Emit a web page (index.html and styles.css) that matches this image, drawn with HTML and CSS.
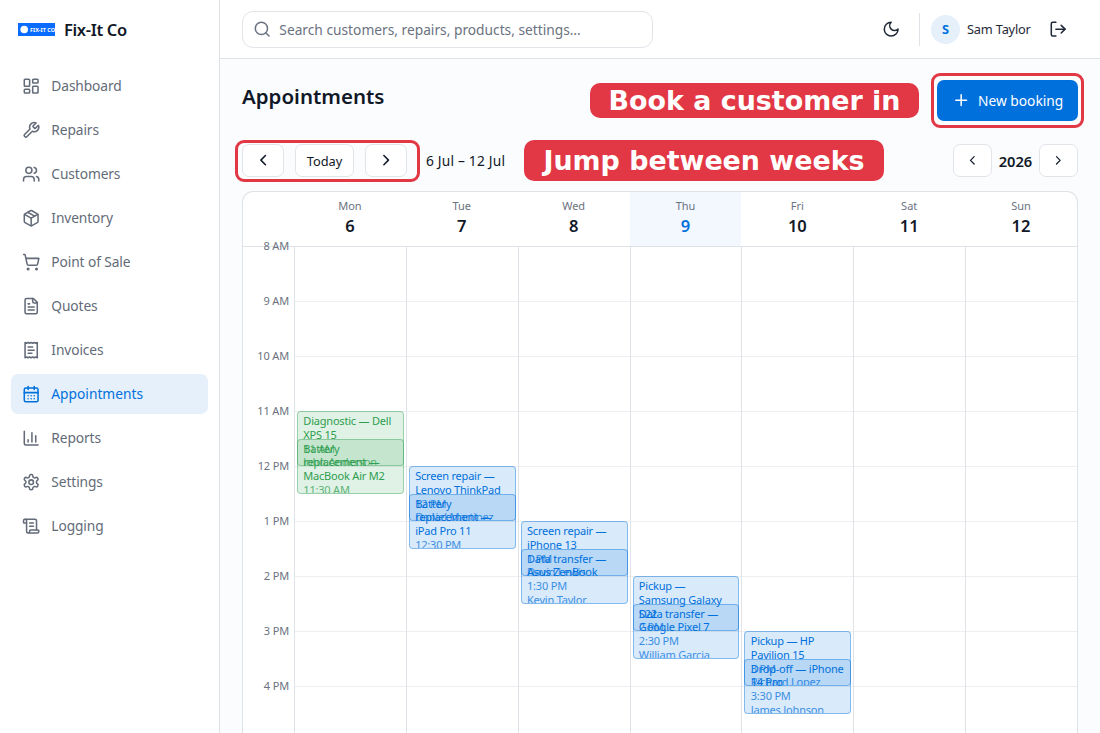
FILE: index.html
```html
<!DOCTYPE html>
<html lang="en">
<head>
  <meta charset="UTF-8" />
  <meta name="viewport" content="width=device-width, initial-scale=1.0"/>
  <title>Appointments - Fix-It Co</title>
  <link rel="stylesheet" href="styles.css">
</head>
<body>
  <aside class="sidebar">
    <div class="brand">
      <svg class="brand-logo" viewBox="0 0 37 13">
        <rect width="37" height="13" fill="#0a6cff"/>
        <circle cx="6.2" cy="6.5" r="3.8" fill="#fff"/>
        <text x="12" y="8.5" class="brand-logo-text" textLength="25" lengthAdjust="spacingAndGlyphs">FIX-IT CO</text>
      </svg>
      <span class="brand-name">Fix-It Co</span>
    </div>
    <nav class="nav">
      <a class="nav-item"><svg class="icon" viewBox="0 0 24 24"><rect width="7" height="9" x="3" y="3" rx="1"/><rect width="7" height="5" x="14" y="3" rx="1"/><rect width="7" height="9" x="14" y="12" rx="1"/><rect width="7" height="5" x="3" y="16" rx="1"/></svg><span>Dashboard</span></a>
      <a class="nav-item"><svg class="icon" viewBox="0 0 24 24"><path d="M14.7 6.3a1 1 0 0 0 0 1.4l1.6 1.6a1 1 0 0 0 1.4 0l3.77-3.77a6 6 0 0 1-7.94 7.94l-6.91 6.91a2.12 2.12 0 0 1-3-3l6.91-6.91a6 6 0 0 1 7.94-7.94l-3.76 3.76z"/></svg><span>Repairs</span></a>
      <a class="nav-item"><svg class="icon" viewBox="0 0 24 24"><path d="M16 21v-2a4 4 0 0 0-4-4H6a4 4 0 0 0-4 4v2"/><circle cx="9" cy="7" r="4"/><path d="M22 21v-2a4 4 0 0 0-3-3.87"/><path d="M16 3.13a4 4 0 0 1 0 7.75"/></svg><span>Customers</span></a>
      <a class="nav-item"><svg class="icon" viewBox="0 0 24 24"><path d="M11 21.73a2 2 0 0 0 2 0l7-4A2 2 0 0 0 21 16V8a2 2 0 0 0-1-1.73l-7-4a2 2 0 0 0-2 0l-7 4A2 2 0 0 0 3 8v8a2 2 0 0 0 1 1.73z"/><path d="M12 22V12"/><path d="m3.3 7 8.7 5 8.7-5"/><path d="m7.5 4.27 9 5.15"/></svg><span>Inventory</span></a>
      <a class="nav-item"><svg class="icon" viewBox="0 0 24 24"><circle cx="8" cy="21" r="1"/><circle cx="19" cy="21" r="1"/><path d="M2.05 2.05h2l2.66 12.42a2 2 0 0 0 2 1.58h9.78a2 2 0 0 0 1.95-1.57l1.65-7.43H5.12"/></svg><span>Point of Sale</span></a>
      <a class="nav-item"><svg class="icon" viewBox="0 0 24 24"><path d="M15 2H6a2 2 0 0 0-2 2v16a2 2 0 0 0 2 2h12a2 2 0 0 0 2-2V7Z"/><path d="M14 2v4a2 2 0 0 0 2 2h4"/><path d="M10 9H8"/><path d="M16 13H8"/><path d="M16 17H8"/></svg><span>Quotes</span></a>
      <a class="nav-item"><svg class="icon" viewBox="0 0 24 24"><path d="M4 2v20l2-1 2 1 2-1 2 1 2-1 2 1 2-1 2 1V2l-2 1-2-1-2 1-2-1-2 1-2-1-2 1Z"/><path d="M14 8H8"/><path d="M16 12H8"/><path d="M13 16H8"/></svg><span>Invoices</span></a>
      <a class="nav-item active"><svg class="icon" viewBox="0 0 24 24"><path d="M8 2v4"/><path d="M16 2v4"/><rect width="18" height="18" x="3" y="4" rx="2"/><path d="M3 10h18"/><path d="M8 14h.01"/><path d="M12 14h.01"/><path d="M16 14h.01"/><path d="M8 18h.01"/><path d="M12 18h.01"/><path d="M16 18h.01"/></svg><span>Appointments</span></a>
      <a class="nav-item"><svg class="icon" viewBox="0 0 24 24"><path d="M3 3v16a2 2 0 0 0 2 2h16"/><path d="M18 17V9"/><path d="M13 17V5"/><path d="M8 17v-3"/></svg><span>Reports</span></a>
      <a class="nav-item"><svg class="icon" viewBox="0 0 24 24"><path d="M12.22 2h-.44a2 2 0 0 0-2 2v.18a2 2 0 0 1-1 1.73l-.43.25a2 2 0 0 1-2 0l-.15-.08a2 2 0 0 0-2.73.73l-.22.38a2 2 0 0 0 .73 2.73l.15.1a2 2 0 0 1 1 1.72v.51a2 2 0 0 1-1 1.74l-.15.09a2 2 0 0 0-.73 2.73l.22.38a2 2 0 0 0 2.73.73l.15-.08a2 2 0 0 1 2 0l.43.25a2 2 0 0 1 1 1.73V20a2 2 0 0 0 2 2h.44a2 2 0 0 0 2-2v-.18a2 2 0 0 1 1-1.73l.43-.25a2 2 0 0 1 2 0l.15.08a2 2 0 0 0 2.73-.73l.22-.39a2 2 0 0 0-.73-2.73l-.15-.08a2 2 0 0 1-1-1.74v-.5a2 2 0 0 1 1-1.74l.15-.09a2 2 0 0 0 .73-2.73l-.22-.38a2 2 0 0 0-2.73-.73l-.15.08a2 2 0 0 1-2 0l-.43-.25a2 2 0 0 1-1-1.73V4a2 2 0 0 0-2-2z"/><circle cx="12" cy="12" r="3"/></svg><span>Settings</span></a>
      <a class="nav-item"><svg class="icon" viewBox="0 0 24 24"><path d="M15 12h-5"/><path d="M15 8h-5"/><path d="M19 17V5a2 2 0 0 0-2-2H4"/><path d="M8 21h12a2 2 0 0 0 2-2v-1a1 1 0 0 0-1-1H11a1 1 0 0 0-1 1v1a2 2 0 1 1-4 0V5a2 2 0 1 0-4 0v2a1 1 0 0 0 1 1h3"/></svg><span>Logging</span></a>
    </nav>
  </aside>

  <div class="page">
    <header class="topbar">
      <div class="search">
        <svg class="icon" viewBox="0 0 24 24"><circle cx="11" cy="11" r="8"/><path d="m21 21-4.3-4.3"/></svg>
        <span>Search customers, repairs, products, settings…</span>
      </div>
      <div class="user-area">
        <svg class="icon" viewBox="0 0 24 24"><path d="M12 3a6 6 0 0 0 9 9 9 9 0 1 1-9-9Z"/></svg>
        <div class="divider"></div>
        <div class="avatar">S</div>
        <span class="user-name">Sam Taylor</span>
        <svg class="icon" viewBox="0 0 24 24"><path d="m16 17 5-5-5-5"/><path d="M21 12H9"/><path d="M9 21H5a2 2 0 0 1-2-2V5a2 2 0 0 1 2-2h4"/></svg>
      </div>
    </header>

    <main class="content">
      <div class="title-row">
        <h1>Appointments</h1>
        <div class="callout callout-book">Book a customer in</div>
        <div class="highlighted">
          <button class="btn-primary">
            <svg class="icon" viewBox="0 0 24 24"><path d="M5 12h14"/><path d="M12 5v14"/></svg>
            <span>New booking</span>
          </button>
        </div>
      </div>

      <div class="toolbar">
        <div class="highlighted week-nav">
          <button class="btn"><svg class="icon" viewBox="0 0 24 24"><path d="m15 18-6-6 6-6"/></svg></button>
          <button class="btn btn-today">Today</button>
          <button class="btn"><svg class="icon" viewBox="0 0 24 24"><path d="m9 18 6-6-6-6"/></svg></button>
        </div>
        <span class="range">6 Jul – 12 Jul</span>
        <div class="callout callout-weeks">Jump between weeks</div>
        <div class="year-nav">
          <button class="btn"><svg class="icon" viewBox="0 0 24 24"><path d="m15 18-6-6 6-6"/></svg></button>
          <span class="year">2026</span>
          <button class="btn"><svg class="icon" viewBox="0 0 24 24"><path d="m9 18 6-6-6-6"/></svg></button>
        </div>
      </div>

      <div class="calendar">
        <div class="cal-head">
          <div></div>
          <div class="day"><span>Mon</span><b>6</b></div>
          <div class="day"><span>Tue</span><b>7</b></div>
          <div class="day"><span>Wed</span><b>8</b></div>
          <div class="day today"><span>Thu</span><b>9</b></div>
          <div class="day"><span>Fri</span><b>10</b></div>
          <div class="day"><span>Sat</span><b>11</b></div>
          <div class="day"><span>Sun</span><b>12</b></div>
        </div>
        <div class="cal-body">
          <div class="hours">
            <div><span>8 AM</span></div>
            <div><span>9 AM</span></div>
            <div><span>10 AM</span></div>
            <div><span>11 AM</span></div>
            <div><span>12 PM</span></div>
            <div><span>1 PM</span></div>
            <div><span>2 PM</span></div>
            <div><span>3 PM</span></div>
            <div><span>4 PM</span></div>
          </div>
          <div class="col">
            <div class="event green" style="top: 164px"><p>Diagnostic — Dell<br>XPS 15</p><small>11 AM</small><small>John Anderson</small></div>
            <div class="event green" style="top: 191.5px"><p>Battery<br>replacement —<br>MacBook Air M2</p><small>11:30 AM</small></div>
          </div>
          <div class="col">
            <div class="event" style="top: 219px"><p>Screen repair —<br>Lenovo ThinkPad</p><small>12 PM</small><small>Daniel Martinez</small></div>
            <div class="event" style="top: 246.5px"><p>Battery<br>replacement —<br>iPad Pro 11</p><small>12:30 PM</small></div>
          </div>
          <div class="col">
            <div class="event" style="top: 274px"><p>Screen repair —<br>iPhone 13</p><small>1 PM</small><small>David Lewis</small></div>
            <div class="event" style="top: 301.5px"><p>Data transfer —<br>Asus ZenBook</p><small>1:30 PM</small><small>Kevin Taylor</small></div>
          </div>
          <div class="col">
            <div class="event" style="top: 329px"><p>Pickup —<br>Samsung Galaxy<br>S22</p><small>2 PM</small></div>
            <div class="event" style="top: 356.5px"><p>Data transfer —<br>Google Pixel 7</p><small>2:30 PM</small><small>William Garcia</small></div>
          </div>
          <div class="col">
            <div class="event" style="top: 384px"><p>Pickup — HP<br>Pavilion 15</p><small>3 PM</small><small>Richard Lopez</small></div>
            <div class="event" style="top: 411.5px"><p>Drop-off — iPhone<br>14 Pro</p><small>3:30 PM</small><small>James Johnson</small></div>
          </div>
          <div class="col"></div>
          <div class="col"></div>
        </div>
      </div>
    </main>
  </div>
</body>
</html>
```
FILE: styles.css
```css
* {
  box-sizing: border-box;
}

body {
  margin: 0;
  height: 100vh;
  display: flex;
  overflow: hidden;
  font-family: 'Noto Sans', sans-serif;
  font-size: 13.75px;
  color: #111827;
  background: #fbfcfe;
}

h1, p {
  margin: 0;
}

button {
  font-family: inherit;
  color: inherit;
  padding: 0;
}

.icon {
  width: 18.33px;
  height: 18.33px;
  flex-shrink: 0;
  fill: none;
  stroke: currentColor;
  stroke-width: 2;
  stroke-linecap: round;
  stroke-linejoin: round;
}

.sidebar {
  width: 220px;
  flex-shrink: 0;
  background: #fff;
  border-right: 1px solid #dfe3e8;
}

.brand {
  height: 59px;
  display: flex;
  align-items: center;
  gap: 9px;
  padding-left: 18px;
}

.brand-logo {
  width: 37px;
  height: 13px;
}

.brand-logo-text {
  font-size: 5px;
  font-weight: 700;
  fill: #fff;
}

.brand-name {
  font-size: 16.5px;
  font-weight: 600;
  letter-spacing: -0.35px;
}

.nav {
  display: flex;
  flex-direction: column;
  gap: 4px;
  padding: 7px 11px;
}

.nav-item {
  height: 40px;
  display: flex;
  align-items: center;
  gap: 11px;
  padding-left: 11px;
  border-radius: 7px;
  color: #636b78;
  letter-spacing: -0.1px;
}

.nav-item span {
  margin-top: -1px;
}

.nav-item.active {
  background: #e5f0fb;
  color: #0070dc;
  letter-spacing: 0;
}

.page {
  flex: 1;
  min-width: 0;
  display: flex;
  flex-direction: column;
}

.topbar {
  height: 59px;
  flex-shrink: 0;
  display: flex;
  align-items: center;
  justify-content: space-between;
  padding: 0 33px 0 22px;
  background: #fff;
  border-bottom: 1px solid #dfe3e8;
}

.search {
  width: 411px;
  height: 37px;
  display: flex;
  align-items: center;
  gap: 8px;
  padding-left: 10px;
  border: 1px solid #e1e4e9;
  border-radius: 11px;
  color: #6b7280;
}

.user-area {
  display: flex;
  align-items: center;
  color: #1f2937;
}

.divider {
  width: 1px;
  height: 33px;
  margin: 0 11px 0 19px;
  background: #dfe3e8;
}

.avatar {
  width: 29px;
  height: 29px;
  display: flex;
  align-items: center;
  justify-content: center;
  border-radius: 50%;
  background: #e5f0fb;
  color: #0070dc;
  font-size: 12.8px;
  font-weight: 700;
}

.user-name {
  margin: 0 18px 0 7px;
  font-size: 12.8px;
  letter-spacing: -0.2px;
}

.content {
  flex: 1;
  min-height: 0;
  display: flex;
  flex-direction: column;
  padding: 14px 22px 0;
}

.title-row {
  height: 55px;
  flex-shrink: 0;
  display: flex;
  align-items: center;
}

h1 {
  margin: -9px auto 0 0;
  font-size: 20.5px;
  line-height: 28px;
  font-weight: 600;
}

.highlighted {
  border: 3px solid #e23744;
  border-radius: 9px;
}

.title-row .highlighted {
  margin-right: -6px;
  padding: 4px 3px;
}

.btn-primary {
  width: 141px;
  height: 41px;
  display: flex;
  align-items: center;
  justify-content: center;
  gap: 8px;
  border: none;
  border-radius: 7px;
  background: #0070dc;
  color: #fff;
  font-size: 13.75px;
}

.callout {
  display: flex;
  align-items: center;
  justify-content: center;
  border-radius: 10px;
  background: #e23744;
  color: #fff;
  font-family: 'DejaVu Sans', sans-serif;
  font-weight: 700;
  font-size: 26.9px;
  white-space: nowrap;
}

.callout-book {
  width: 329px;
  height: 35px;
  margin-right: 12px;
}

.callout-weeks {
  width: 360px;
  height: 41px;
  margin-left: 19px;
}

.toolbar {
  height: 41px;
  flex-shrink: 0;
  margin-top: 12px;
  display: flex;
  align-items: center;
}

.week-nav {
  width: 185px;
  height: 42px;
  margin-left: -7px;
  padding-left: 4px;
  display: flex;
  align-items: center;
  gap: 11px;
}

.btn {
  width: 42px;
  height: 33px;
  display: flex;
  align-items: center;
  justify-content: center;
  border: 1px solid #e1e4e9;
  border-radius: 7px;
  background: #fff;
}

.btn-today {
  width: 59px;
  font-size: 12.8px;
}

.range {
  width: 79px;
  margin-left: 6px;
  letter-spacing: 0.2px;
  white-space: nowrap;
}

.year-nav {
  margin-left: auto;
  display: flex;
  align-items: center;
}

.year-nav .btn {
  width: 39px;
}

.year-nav .icon {
  width: 14.67px;
  height: 14.67px;
}

.year {
  width: 47px;
  text-align: center;
  font-size: 14.67px;
  font-weight: 600;
}

.calendar {
  flex: 1;
  min-height: 0;
  margin-top: 10px;
  border: 1px solid #dfe3e8;
  border-bottom: none;
  border-radius: 11px 11px 0 0;
  background: #fff;
  overflow: hidden;
}

.cal-head {
  height: 55px;
  display: grid;
  grid-template-columns: 51px repeat(7, 1fr);
  border-bottom: 1px solid #dfe3e8;
}

.day {
  display: flex;
  flex-direction: column;
  align-items: center;
  padding-top: 6px;
}

.day span {
  font-size: 11px;
  line-height: 16px;
  color: #6b7280;
}

.day b {
  font-size: 16.5px;
  line-height: 24px;
  font-weight: 600;
}

.day.today {
  background: #f2f8fe;
}

.day.today b {
  color: #0070dc;
}

.cal-body {
  height: 486px;
  display: grid;
  grid-template-columns: 51px repeat(7, 1fr);
}

.hours div {
  height: 55px;
  text-align: right;
  padding-right: 5px;
}

.hours div:last-child {
  height: 46px;
}

.hours span {
  position: relative;
  top: -10px;
  display: block;
  font-size: 11px;
  line-height: 17px;
  color: #6b7280;
  letter-spacing: -0.15px;
}

.col {
  position: relative;
  border-left: 1px solid #dfe3e8;
  background: repeating-linear-gradient(#fff 0 54px, #eceef0 54px 55px);
}

.event {
  position: absolute;
  left: 2px;
  right: 2px;
  height: 55px;
  overflow: hidden;
  padding: 2px 5.3px;
  border: 1px solid rgba(0, 112, 220, 0.4);
  border-radius: 4px;
  background: rgba(0, 112, 220, 0.15);
  color: #0070dc;
  font-size: 11px;
  line-height: 13.75px;
  letter-spacing: -0.2px;
  white-space: nowrap;
}

.event.green {
  border-color: rgba(46, 158, 79, 0.4);
  background: rgba(46, 158, 79, 0.15);
  color: #2e9e4f;
}

.event small {
  display: block;
  font-size: 11px;
  opacity: 0.75;
}
```
